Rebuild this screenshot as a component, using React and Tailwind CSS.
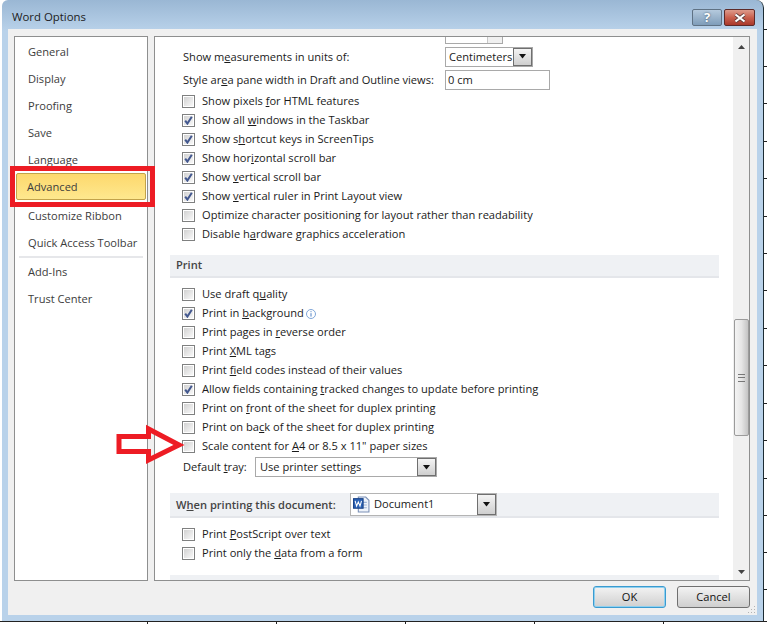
import { Fragment } from 'react'

const font = { fontFamily: '"Open Sans", sans-serif' }

// u marks the access key letter with an underline
function Label({ text, u }) {
  if (u == null) return <span>{text}</span>
  return (
    <span>
      {text.slice(0, u)}
      <u>{text[u]}</u>
      {text.slice(u + 1)}
    </span>
  )
}

function Checkbox({ checked }) {
  return (
    <span className="flex h-[13px] w-[13px] shrink-0 border border-[#7f8080] bg-white p-px">
      <span className="relative block h-full w-full bg-gradient-to-br from-[#d2d2d2] to-[#f8f8f8]">
        {checked && (
          <svg viewBox="0 0 9 9" className="absolute inset-0 h-[9px] w-[9px]">
            <path d="M1.2 4.6 L3.4 7.6 L7.8 0.8" fill="none" stroke="#43588f" strokeWidth="2" />
          </svg>
        )}
      </span>
    </span>
  )
}

function Row({ text, u, checked, children }) {
  return (
    <div className="flex h-[19px] items-center pl-[12px]">
      <Checkbox checked={checked} />
      <span className="ml-[7px] whitespace-nowrap pb-[2px]"><Label text={text} u={u} /></span>
      {children}
    </div>
  )
}

function DropButton({ className }) {
  return (
    <span className={`flex items-center justify-center border border-[#6f6f6f] bg-gradient-to-b from-[#f4f4f4] to-[#cfcfcf] ${className}`}>
      <svg viewBox="0 0 9 5" className="h-[5px] w-[9px]">
        <path d="M1 0 H8 L4.5 4.5 Z" fill="#111" />
      </svg>
    </span>
  )
}

function SectionBand({ children, className = '' }) {
  return (
    <div className={`flex items-center border-b-2 border-[#e4e6ea] bg-[#eff1f4] font-semibold text-[#444] ${className}`}>
      {children}
    </div>
  )
}

const navTop = ['General', 'Display', 'Proofing', 'Save', 'Language']
const navMid = ['Customize Ribbon', 'Quick Access Toolbar']
const navEnd = ['Add-Ins', 'Trust Center']

function NavItem({ label }) {
  return <div className="flex h-[27px] items-center pl-[13px]">{label}</div>
}

const displayRows = [
  ['Show pixels for HTML features', 12, false],
  ['Show all windows in the Taskbar', 9, true],
  ['Show shortcut keys in ScreenTips', 6, true],
  ['Show horizontal scroll bar', 8, true],
  ['Show vertical scroll bar', 5, true],
  ['Show vertical ruler in Print Layout view', 5, true],
  ['Optimize character positioning for layout rather than readability', null, false],
  ['Disable hardware graphics acceleration', 9, false],
]

const printRows = [
  ['Use draft quality', 11, false],
  ['Print in background', 9, true],
  ['Print pages in reverse order', 15, false],
  ['Print XML tags', 6, false],
  ['Print field codes instead of their values', 6, false],
  ['Allow fields containing tracked changes to update before printing', 24, true],
  ['Print on front of the sheet for duplex printing', 9, false],
  ['Print on back of the sheet for duplex printing', 11, false],
  ['Scale content for A4 or 8.5 x 11" paper sizes', 18, false],
]

const rightTicks = [30, 37, 37, 38, 37, 38, 37, 37, 38, 37, 38, 37, 38, 37, 37, 37]

export default function App() {
  return (
    <div className="relative h-[624px] w-[767px] overflow-hidden bg-white text-[11.1px] leading-none text-[#1a1a1a]" style={font}>
      <div className="flex h-[621px]">
        {/* Window frame */}
        <div className="ml-[2px] flex h-[621px] w-[762px] flex-col rounded-tl-[6px] rounded-tr-[8px] border-r border-[#1c2b33] bg-gradient-to-b from-[#9ab7d4] from-0% to-[#b9d2ea] to-[5%]">
          <div className="flex h-[29px] shrink-0 items-start">
            <span className="ml-[10px] mt-[11px] text-[11.4px] text-[#1c1c1c]">Word Options</span>
            <div className="ml-auto mr-[8px] mt-[9px] flex gap-[2px]">
              <span className="flex h-[17px] w-[30px] items-center justify-center rounded-[2px] border border-[#5f7284] bg-gradient-to-b from-[#b5cade] to-[#7f9db9] text-[13px] font-bold text-white" style={{ textShadow: '0 0 2px #34495c' }}>?</span>
              <span className="flex h-[17px] w-[31px] items-center justify-center rounded-[2px] border border-[#5d2a28] bg-gradient-to-b from-[#dc9a8c] via-[#c9604e] to-[#a9382b]">
                <svg viewBox="0 0 14 10" className="h-[10px] w-[14px]">
                  <path d="M2.5 1.5 L11.5 8.5 M11.5 1.5 L2.5 8.5" stroke="#5b3a3a" strokeWidth="3.6" />
                  <path d="M2.5 1.5 L11.5 8.5 M11.5 1.5 L2.5 8.5" stroke="#fff" strokeWidth="2.2" />
                </svg>
              </span>
            </div>
          </div>

          {/* Client area */}
          <div className="mx-[6px] flex h-[586px] shrink-0 flex-col bg-[#f0f0f0]">
            <div className="flex h-[552px] gap-[6px] pl-[6px] pt-[7px]">
              {/* Left nav */}
              <div className="h-[545px] w-[134px] shrink-0 border border-[#8e8f8f] bg-white pt-px text-[#3c3c3c]">
                {navTop.map((n) => <NavItem key={n} label={n} />)}
                <div className="mx-px flex h-[27px] items-center rounded-[2px] border border-[#c2a24a] bg-gradient-to-b from-[#fdd86c] to-[#fee88e] pl-[10px]">Advanced</div>
                <div className="h-[2px]" />
                {navMid.map((n) => <NavItem key={n} label={n} />)}
                <div className="mx-[4px] h-[2px] bg-[#e6e7ea]" />
                {navEnd.map((n) => <NavItem key={n} label={n} />)}
              </div>

              {/* Options panel */}
              <div className="flex h-[545px] w-[596px] shrink-0 border border-[#8e8f8f] bg-white">
                <div className="w-[578px] overflow-hidden pl-[15px] pr-[14px]">
                  <div className="ml-[275px] h-[7px] w-[58px] border-x border-b border-[#a9a9a9]">
                    <div className="ml-auto h-full w-[15px] border-l border-[#c8c8c8] bg-[#f0f0f0]" />
                  </div>
                  <div className="mt-[3px] flex h-[19px] items-center pl-[13px]">
                    <span className="w-[262px] whitespace-nowrap"><Label text="Show measurements in units of:" u={6} /></span>
                    <span className="flex h-[20px] w-[88px] items-center border border-[#a9a9a9] pl-[3px]">
                      Centimeters
                      <DropButton className="ml-auto h-[18px] w-[19px]" />
                    </span>
                  </div>
                  <div className="mt-[4px] flex h-[20px] items-center pl-[13px]">
                    <span className="w-[262px] whitespace-nowrap"><Label text="Style area pane width in Draft and Outline views:" u={8} /></span>
                    <span className="flex h-[20px] w-[105px] items-center border border-[#a9a9a9] pl-[2px]">0 cm</span>
                  </div>
                  <div className="mt-[2px]">
                    {displayRows.map(([t, u, c]) => <Row key={t} text={t} u={u} checked={c} />)}
                  </div>

                  <SectionBand className="mt-[11px] h-[23px] pb-[2px] pl-[6px]">Print</SectionBand>
                  <div className="mt-[7px]">
                    {printRows.map(([t, u, c]) => (
                      <Row key={t} text={t} u={u} checked={c}>
                        {t === 'Print in background' && (
                          <svg viewBox="0 0 10 10" className="ml-[2px] h-[10px] w-[10px]">
                            <circle cx="5" cy="5" r="4.5" fill="#fff" stroke="#7fa6d8" />
                            <path d="M5 4.2 V7.6 M5 2.2 V3.2" stroke="#4e80c4" strokeWidth="1" />
                          </svg>
                        )}
                      </Row>
                    ))}
                  </div>
                  <div className="mt-px flex h-[20px] items-center pl-[13px]">
                    <span className="w-[73px] whitespace-nowrap"><Label text="Default tray:" u={8} /></span>
                    <span className="-ml-px flex h-[20px] w-[182px] items-center border border-[#a9a9a9] pl-[4px]">
                      Use printer settings
                      <DropButton className="ml-auto h-[18px] w-[19px]" />
                    </span>
                  </div>

                  <SectionBand className="mt-[16px] h-[25px] pl-[6px]">
                    <span className="w-[174px] whitespace-nowrap"><Label text="When printing this document:" u={1} /></span>
                    <span className="flex h-[23px] w-[147px] items-center border border-[#b4b4b4] bg-white pl-[2px] font-normal text-[#1a1a1a]">
                      <svg viewBox="0 0 16 16" className="mr-[4px] h-[17px] w-[17px]">
                        <path d="M5 1 H12 L15 4 V15 H5 Z" fill="#eef3fa" stroke="#7a8fb5" />
                        <path d="M7 6 H13 M7 8.5 H13 M7 11 H13" stroke="#9db4d6" />
                        <rect x="0.5" y="2.5" width="9" height="9" fill="#2b62b5" stroke="#1b4488" />
                        <path d="M2 4.5 L3.4 9.5 L5 5.5 L6.6 9.5 L8 4.5" fill="none" stroke="#fff" strokeWidth="1" />
                      </svg>
                      <span className="pb-[2px]">Document1</span>
                      <DropButton className="ml-auto h-[21px] w-[19px]" />
                    </span>
                  </SectionBand>
                  <div className="mt-[7px]">
                    <Row text="Print PostScript over text" u={6} />
                    <Row text="Print only the data from a form" u={15} />
                  </div>
                  <div className="mt-[12px] h-[8px] bg-[#eff1f4]" />
                </div>

                {/* Scrollbar */}
                <div className="flex w-[16px] flex-col items-center bg-[#f0f0f0]">
                  <svg viewBox="0 0 7 4" className="mt-[8px] h-[4px] w-[7px] shrink-0">
                    <path d="M0 4 H7 L3.5 0 Z" fill="#444" />
                  </svg>
                  <div className="mt-[270px] flex h-[117px] w-[15px] shrink-0 items-center justify-center rounded-[2px] border border-[#9b9b9b] bg-gradient-to-r from-[#f4f4f4] via-[#e6e6e6] to-[#c4c4c4]">
                    <span className="h-[8px] w-[7px] border-y border-[#777] bg-[linear-gradient(#777,#777)] bg-[length:100%_1px] bg-center bg-no-repeat" />
                  </div>
                  <svg viewBox="0 0 7 4" className="mt-[134px] h-[4px] w-[7px] shrink-0">
                    <path d="M0 0 H7 L3.5 4 Z" fill="#444" />
                  </svg>
                </div>
              </div>
            </div>

            {/* Footer buttons */}
            <div className="relative flex flex-1 items-start justify-end gap-[11px] pr-[7px] pt-[5px]">
              <span className="flex h-[22px] w-[73px] items-center justify-center rounded-[3px] border border-[#3a9bd0] bg-gradient-to-b from-[#f3f3f3] to-[#cfcfcf] text-[#111] shadow-[0_0_0_1px_#8fd0ef_inset]">OK</span>
              <span className="flex h-[22px] w-[73px] items-center justify-center rounded-[3px] border border-[#707070] bg-gradient-to-b from-[#f3f3f3] to-[#cfcfcf] text-[#111]">Cancel</span>
              <svg viewBox="0 0 8 8" className="absolute bottom-[1px] right-[1px] h-[8px] w-[8px]">
                <path d="M6 0h1v1H6zM3 3h1v1H3zM6 3h1v1H6zM0 6h1v1H0zM3 6h1v1H3zM6 6h1v1H6z" fill="#b3b3b3" />
              </svg>
            </div>
          </div>
        </div>

        {/* Sliver of what is behind the window */}
        <div className="flex w-[3px] flex-col">
          {rightTicks.map((h, i) => (
            <div key={i} className="shrink-0 border-b border-[#222]" style={{ height: h }} />
          ))}
        </div>
      </div>

      {/* Strip under the window */}
      <div className="flex h-[3px] border-t border-[#222] pl-[19px]">
        {[129, 129, 129, 129, 129].map((w, i) => (
          <Fragment key={i}>
            <div className="h-full shrink-0 border-r border-[#222]" style={{ width: w }} />
          </Fragment>
        ))}
      </div>

      {/* Red annotations on top of the screenshot */}
      <div className="absolute left-[10px] top-[166px] h-[41px] w-[145px] border-[5px] border-[#ed1c24]" />
      <svg viewBox="0 0 767 624" className="pointer-events-none absolute inset-0 h-[624px] w-[767px]">
        <path d="M119 436.5 H148.5 V429 L179 445 L148.5 460 V451.5 H119 Z" fill="none" stroke="#ed1c24" strokeWidth="5" />
      </svg>
    </div>
  )
}
